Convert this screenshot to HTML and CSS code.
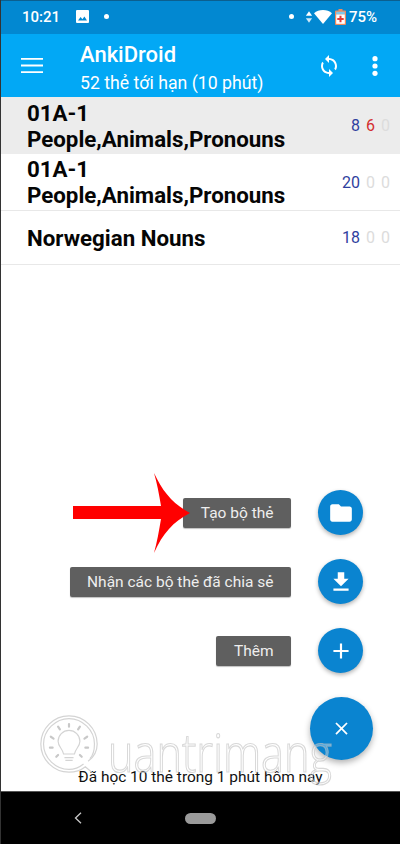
FILE: index.html
```html
<!DOCTYPE html>
<html lang="vi">
<head>
<meta charset="utf-8">
<title>AnkiDroid</title>
<link rel="stylesheet" href="styles.css">
</head>
<body>
<div class="phone">
  <header class="status">
    <span class="clock">10:21</span>
    <svg class="ic-image" viewBox="0 0 13 13"><path fill="#fff" d="M1 0h11a1 1 0 0 1 1 1v11a1 1 0 0 1-1 1H1a1 1 0 0 1-1-1V1a1 1 0 0 1 1-1z"/><path fill="#0288d1" d="M2 10.500l2.600-3.400 1.800 2.200 2-2.900 2.600 4.100z"/></svg>
    <span class="dot dot-left"></span>
    <span class="status-fill"></span>
    <span class="dot dot-right"></span>
    <svg class="ic-data" viewBox="0 0 9 13"><path fill="#fff" d="M4.500 0L8 5H1z"/><path fill="#cfe8f7" d="M1 8h7l-3.500 5z"/></svg>
    <svg class="ic-wifi" viewBox="0 0 18 14"><path fill="#fff" d="M9 14L0 3.200C2.400 1.200 5.500 0 9 0s6.600 1.200 9 3.200z"/></svg>
    <svg class="ic-batt" viewBox="0 0 11 16"><path fill="#f08a5d" d="M3.500 0h4v1.500H10a1 1 0 0 1 1 1V15a1 1 0 0 1-1 1H1a1 1 0 0 1-1-1V2.500a1 1 0 0 1 1-1h2.500z"/><path fill="#7fc7ea" d="M1.200 2.700h8.600v2.800H1.200z"/><path fill="#fff" d="M1.200 5.500h8.600v9.300H1.200z"/><path fill="#e53935" d="M4.500 6.800h2v2.200h2.200v2H6.500v2.200h-2V11H2.300V9h2.200z"/></svg>
    <span class="pct">75%</span>
  </header>

  <div class="toolbar">
    <svg class="ic-menu" viewBox="0 0 22 15"><path fill="#fff" d="M0 0h22v1.800H0zM0 6.600h22v1.800H0zM0 13.200h22V15H0z"/></svg>
    <div class="titles">
      <div class="title">AnkiDroid</div>
      <div class="subtitle">52 thẻ tới hạn (10 phút)</div>
    </div>
    <svg class="ic-sync" viewBox="0 0 24 24"><path fill="#fff" d="M12 4V1L8 5l4 4V6c3.310 0 6 2.690 6 6 0 1.010-.25 1.970-.7 2.800l1.460 1.460C19.540 15.030 20 13.570 20 12c0-4.420-3.580-8-8-8zm0 14c-3.310 0-6-2.690-6-6 0-1.010.25-1.970.7-2.800L5.240 7.740C4.460 8.970 4 10.430 4 12c0 4.420 3.580 8 8 8v3l4-4-4-4v3z"/></svg>
    <svg class="ic-more" viewBox="0 0 6 20"><circle fill="#fff" cx="3" cy="2.700" r="2.600"/><circle fill="#fff" cx="3" cy="10" r="2.600"/><circle fill="#fff" cx="3" cy="17.300" r="2.600"/></svg>
  </div>

  <section class="decks">
    <div class="deck deck-active">
      <div class="deck-name">01A-1<br>People,Animals,Pronouns</div>
      <div class="counts"><span class="c-new">8</span><span class="c-lrn">6</span><span class="c-zero">0</span></div>
    </div>
    <div class="deck deck-line">
      <div class="deck-name">01A-1<br>People,Animals,Pronouns</div>
      <div class="counts"><span class="c-new">20</span><span class="c-zero">0</span><span class="c-zero">0</span></div>
    </div>
    <div class="deck deck-line deck-single">
      <div class="deck-name">Norwegian Nouns</div>
      <div class="counts"><span class="c-new">18</span><span class="c-zero">0</span><span class="c-zero">0</span></div>
    </div>
  </section>

  <main class="fab-area">
    <div class="fab-row">
      <span class="fab-label">Tạo bộ thẻ</span>
      <button class="fab-mini"><svg viewBox="0 0 24 24"><path fill="#fff" d="M10 4H4c-1.100 0-2 .9-2 2v12c0 1.100.9 2 2 2h16c1.100 0 2-.9 2-2V8c0-1.100-.9-2-2-2h-8l-2-2z"/></svg></button>
    </div>
    <div class="fab-row">
      <span class="fab-label">Nhận các bộ thẻ đã chia sẻ</span>
      <button class="fab-mini"><svg viewBox="0 0 24 24"><path fill="#fff" d="M19 9h-4V3H9v6H5l7 7 7-7zM5 18v2h14v-2H5z"/></svg></button>
    </div>
    <div class="fab-row">
      <span class="fab-label">Thêm</span>
      <button class="fab-mini"><svg viewBox="0 0 24 24"><path fill="#fff" d="M19 13h-6v6h-2v-6H5v-2h6V5h2v6h6v2z"/></svg></button>
    </div>
    <button class="fab-main"><svg viewBox="0 0 24 24"><path fill="#fff" d="M19 6.410L17.590 5 12 10.590 6.410 5 5 6.410 10.590 12 5 17.590 6.410 19 12 13.410 17.590 19 19 17.590 13.410 12z"/></svg></button>
    <p class="study">Đã học 10 thẻ trong 1 phút hôm nay</p>
  </main>

  <nav class="navbar">
    <svg class="ic-back" viewBox="0 0 8 12"><path fill="none" stroke="#c8c8c8" stroke-width="1.300" d="M7 .8L1.500 6 7 11.200"/></svg>
    <span class="home-pill"></span>
  </nav>

  <svg class="arrow" viewBox="0 0 120 84"><path fill="#ff0000" d="M1 35H89C87 23 85 12 82 2C91 21 101 33 118 42C101 51 91 62 82 82C85 71 87 60 89 48H1z"/></svg>

  <div class="watermark">
    <svg class="wm-logo" viewBox="0 0 66 66"><g fill="none" stroke="#d4d4d4" stroke-width="1.300"><path d="M54 52C61 47 64 40 64 33C64 16 50 2 33 2S2 16 2 33S16 64 33 64C40 64 46 62 51 58L58 64"/><path d="M56 49C60 45 61 39 61 33C61 18 48 5 33 5S5 18 5 33S18 61 33 61C39 61 44 59 49 55"/><path d="M27 44C26 38 21 36 21 30A12 12 0 0 1 45 30C45 36 40 38 39 44z"/><path d="M28 48H38M29 51H37"/></g><g stroke="#c8c8c8" stroke-width="2.400" stroke-linecap="round"><path d="M33 11V14M21 14L23 17M45 14L43 17M13 25L16 27M53 25L50 27M12 37H15M54 37H51M19 47L21 45M47 47L45 45"/></g></svg>
    <span class="wm-text">uantrimang</span>
  </div>
</div>
</body>
</html>
```
FILE: styles.css
```css
* { box-sizing: border-box; }
html, body { margin: 0; padding: 0; }
body { font-family: Roboto, "Noto Sans", sans-serif; background: #fff; }

.phone {
  position: relative;
  width: 400px;
  height: 844px;
  overflow: hidden;
  display: flex;
  flex-direction: column;
  background: #fff;
  border-left: 1px solid #333;
}

/* status bar */
.status {
  height: 34px;
  flex: none;
  display: flex;
  align-items: center;
  background: #0288d1;
  border-top: 1px solid #0b5f8f;
  color: #fff;
  padding: 0 23px 2px 21px;
}
.clock { font-size: 15px; font-weight: 500; width: 54px; }
.ic-image { width: 13px; height: 13px; flex: none; }
.dot { width: 5px; height: 5px; border-radius: 50%; background: #fff; flex: none; }
.dot-left { margin-left: 15px; }
.status-fill { flex: 1; }
.ic-data { width: 8px; height: 12px; margin: 0 0 0 11px; flex: none; }
.ic-wifi { width: 18px; height: 14px; margin-left: 1px; flex: none; }
.ic-batt { width: 11px; height: 16px; margin-left: 3px; flex: none; }
.pct { font-size: 15px; font-weight: 500; margin-left: 3px; }

/* toolbar */
.toolbar {
  height: 63px;
  flex: none;
  display: flex;
  align-items: center;
  background: #02a8f5;
  color: #fff;
  padding: 0 22px 0 20px;
}
.ic-menu { width: 22px; height: 15px; flex: none; }
.titles { margin-left: 37px; flex: 1; padding-top: 3px; }
.title { font-size: 22px; font-weight: 500; line-height: 28px; }
.subtitle { font-size: 17.700px; line-height: 22px; margin-top: 3px; }
.ic-sync { width: 24px; height: 24px; flex: none; }
.ic-more { width: 6px; height: 20px; margin-left: 31px; flex: none; }

/* decks */
.decks { flex: none; }
.deck {
  display: flex;
  align-items: center;
  padding: 0 10px 0 26px;
}
.deck-active { height: 57px; background: #ececec; }
.deck-line { border-bottom: 1px solid #e8e8e8; height: 57px; }
.deck-single { height: 54px; }
.deck-name { flex: 1; font-size: 22.300px; font-weight: 700; line-height: 26px; color: #050505; }
.counts { display: flex; gap: 6px; font-size: 16px; }
.c-new { color: #2f3f9e; }
.c-lrn { color: #d32f2f; }
.c-zero { color: #dcdcdc; }

/* FAB menu */
.fab-area {
  flex: 1;
  display: flex;
  flex-direction: column;
  align-items: flex-end;
  justify-content: flex-end;
  padding-right: 37px;
}
.fab-row { display: flex; align-items: center; gap: 27px; height: 45px; margin-bottom: 24px; }
.fab-label {
  background: #5f5f5f;
  color: #eeeeee;
  border-radius: 2px;
  font-size: 15.500px;
  line-height: 30px;
  height: 30px;
  padding: 0 17.500px;
  white-space: nowrap;
  box-shadow: 0 1px 1px rgba(0,0,0,.25);
}
.fab-mini, .fab-main {
  border: 0;
  padding: 0;
  border-radius: 50%;
  background: #0a84d0;
  display: flex;
  align-items: center;
  justify-content: center;
  flex: none;
}
.fab-mini { width: 45px; height: 45px; box-shadow: 0 2px 4px rgba(0,0,0,.3); }
.fab-mini svg { width: 26px; height: 26px; }
.fab-main {
  width: 63px;
  height: 63px;
  margin-right: -10px;
  box-shadow: 0 3px 6px rgba(0,0,0,.3);
}
.fab-main svg { width: 21px; height: 21px; }
.study {
  align-self: center;
  margin: 7px -37px 4px 0;
  width: 399px;
  text-align: center;
  font-size: 15.450px;
  line-height: 20px;
  color: #111;
}

/* nav bar */
.navbar {
  height: 53px;
  flex: none;
  background: #000;
  display: flex;
  align-items: center;
  padding-left: 73px;
  border-top: 1px solid #555;
}
.ic-back { width: 8px; height: 12px; flex: none; }
.home-pill { width: 31px; height: 11px; border-radius: 6px; background: #9a9a9a; margin-left: 103px; }

/* overlays */
.arrow { position: absolute; left: 71px; top: 471px; width: 120px; height: 84px; }
.watermark { position: absolute; left: 38px; top: 712px; display: flex; align-items: center; pointer-events: none; }
.wm-logo { width: 60px; height: 64px; flex: none; }
.wm-text {
  font-family: "Open Sans", sans-serif;
  font-size: 54px;
  font-weight: 300;
  line-height: 30px;
  margin-left: 9px;
  margin-top: 14px;
  transform: scaleX(.8);
  transform-origin: left center;
  color: rgba(255,255,255,.3);
  -webkit-text-stroke: 1.200px rgba(190,190,190,.6);
}
```
